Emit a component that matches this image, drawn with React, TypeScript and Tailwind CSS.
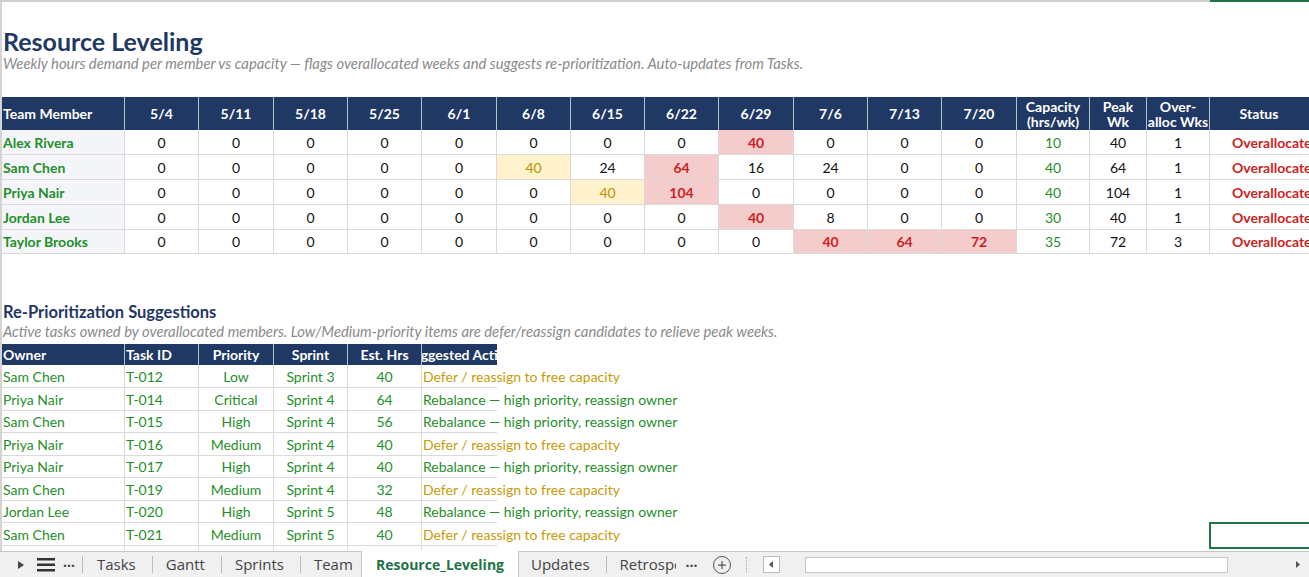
import { Plus } from "lucide-react";

type Cell = { v: number; hi?: "red" | "yellow" };

interface Member {
  name: string;
  weeks: Cell[];
  capacity: number;
  peak: number;
  over: number;
}

const weeks = ["5/4", "5/11", "5/18", "5/25", "6/1", "6/8", "6/15", "6/22", "6/29", "7/6", "7/13", "7/20"];
const weekWidths = ["w-[74px]", "w-[75px]", "w-[74px]", "w-[74px]", "w-[75px]", "w-[74px]", "w-[74px]", "w-[74px]", "w-[75px]", "w-[74px]", "w-[74px]", "w-[75px]"];
const rowHeights = ["h-[25px]", "h-[25px]", "h-[25px]", "h-[25px]", "h-[24px]"];

const z = (): Cell => ({ v: 0 });
const members: Member[] = [
  { name: "Alex Rivera", weeks: [z(), z(), z(), z(), z(), z(), z(), z(), { v: 40, hi: "red" }, z(), z(), z()], capacity: 10, peak: 40, over: 1 },
  { name: "Sam Chen", weeks: [z(), z(), z(), z(), z(), { v: 40, hi: "yellow" }, { v: 24 }, { v: 64, hi: "red" }, { v: 16 }, { v: 24 }, z(), z()], capacity: 40, peak: 64, over: 1 },
  { name: "Priya Nair", weeks: [z(), z(), z(), z(), z(), z(), { v: 40, hi: "yellow" }, { v: 104, hi: "red" }, z(), z(), z(), z()], capacity: 40, peak: 104, over: 1 },
  { name: "Jordan Lee", weeks: [z(), z(), z(), z(), z(), z(), z(), z(), { v: 40, hi: "red" }, { v: 8 }, z(), z()], capacity: 30, peak: 40, over: 1 },
  { name: "Taylor Brooks", weeks: [z(), z(), z(), z(), z(), z(), z(), z(), z(), { v: 40, hi: "red" }, { v: 64, hi: "red" }, { v: 72, hi: "red" }], capacity: 35, peak: 72, over: 3 },
];

const DEFER = "Defer / reassign to free capacity";
const REBAL = "Rebalance — high priority, reassign owner";
const suggestions = [
  ["Sam Chen", "T-012", "Low", "Sprint 3", "40", DEFER],
  ["Priya Nair", "T-014", "Critical", "Sprint 4", "64", REBAL],
  ["Sam Chen", "T-015", "High", "Sprint 4", "56", REBAL],
  ["Priya Nair", "T-016", "Medium", "Sprint 4", "40", DEFER],
  ["Priya Nair", "T-017", "High", "Sprint 4", "40", REBAL],
  ["Sam Chen", "T-019", "Medium", "Sprint 4", "32", DEFER],
  ["Jordan Lee", "T-020", "High", "Sprint 5", "48", REBAL],
  ["Sam Chen", "T-021", "Medium", "Sprint 5", "40", DEFER],
];
const sugHeights = ["h-[23px]", "h-[23px]", "h-[22px]", "h-[23px]", "h-[22px]", "h-[23px]", "h-[22px]", "h-[23px]"];

function HeaderCell({ w, children, left }: { w: string; children: React.ReactNode; left?: boolean }) {
  return (
    <div
      className={`${w} shrink-0 h-full flex items-center ${left ? "justify-start pl-[1px]" : "justify-center text-center"} border-r border-[#b7bdc9] overflow-hidden whitespace-nowrap`}
    >
      {children}
    </div>
  );
}

function TopTable() {
  return (
    <div className="flex flex-col">
      <div className="flex h-[33px] bg-[#1f3864] text-white font-bold text-[14px] leading-[15px]">
        <HeaderCell w="w-[123px]" left>Team Member</HeaderCell>
        {weeks.map((wk, i) => (
          <HeaderCell key={wk} w={weekWidths[i]}>{wk}</HeaderCell>
        ))}
        <HeaderCell w="w-[73px]">
          <span>Capacity<br />(hrs/wk)</span>
        </HeaderCell>
        <HeaderCell w="w-[57px]">
          <span>Peak<br />Wk</span>
        </HeaderCell>
        <HeaderCell w="w-[63px]">
          <span>Over-<br />alloc Wks</span>
        </HeaderCell>
        <div className="w-[110px] shrink-0 flex items-center justify-center pr-[12px]">Status</div>
      </div>
      {members.map((m, r) => (
        <div key={m.name} className={`flex ${rowHeights[r]} text-[14px] border-b border-[#dadada]`}>
          <div className="w-[123px] shrink-0 flex items-center pl-[1px] bg-[#f3f5f9] border-r border-[#dadada] font-bold text-[#1f8f2a]">
            {m.name}
          </div>
          {m.weeks.map((c, i) => (
            <div
              key={i}
              className={`${weekWidths[i]} shrink-0 flex items-center justify-center border-r border-[#dadada] ${
                c.hi === "red"
                  ? "bg-[#f4cccc] text-[#cc1f1f] font-bold"
                  : c.hi === "yellow"
                  ? "bg-[#fff2cc] text-[#bf9000]"
                  : "text-[#111]"
              }`}
            >
              {c.v}
            </div>
          ))}
          <div className="w-[73px] shrink-0 flex items-center justify-center border-r border-[#dadada] text-[#1f8f2a]">{m.capacity}</div>
          <div className="w-[57px] shrink-0 flex items-center justify-center border-r border-[#dadada] text-[#111]">{m.peak}</div>
          <div className="w-[63px] shrink-0 flex items-center justify-center border-r border-[#dadada] text-[#111]">{m.over}</div>
          <div className="w-[110px] shrink-0 flex items-center pl-[22px] font-bold text-[#cc1f1f] whitespace-nowrap">Overallocated</div>
        </div>
      ))}
    </div>
  );
}

function SuggestionTable() {
  const cols = ["w-[123px]", "w-[74px]", "w-[75px]", "w-[74px]", "w-[74px]"];
  return (
    <div className="flex flex-col">
      <div className="flex h-[21px] w-[495px] bg-[#1f3864] text-white font-bold text-[14px]">
        <HeaderCell w={cols[0]} left>Owner</HeaderCell>
        <HeaderCell w={cols[1]} left>Task ID</HeaderCell>
        <HeaderCell w={cols[2]}>Priority</HeaderCell>
        <HeaderCell w={cols[3]}>Sprint</HeaderCell>
        <HeaderCell w={cols[4]}>Est. Hrs</HeaderCell>
        <div className="w-[75px] shrink-0 flex items-center justify-center overflow-hidden whitespace-nowrap">Suggested Action</div>
      </div>
      {suggestions.map((s, r) => (
        <div key={s[1]} className={`flex ${sugHeights[r]} w-[495px] text-[14px] text-[#1f8f2a] border-b border-[#dadada] ${r === 7 ? "relative" : ""}`}>
          {r === 7 && <div className="absolute left-[-2px] top-0 bottom-0 w-[2px] bg-[#217346]" />}
          <div className={`${cols[0]} shrink-0 flex items-center pl-[1px] border-r border-[#dadada]`}>{s[0]}</div>
          <div className={`${cols[1]} shrink-0 flex items-center pl-[1px] border-r border-[#dadada]`}>{s[1]}</div>
          <div className={`${cols[2]} shrink-0 flex items-center justify-center border-r border-[#dadada]`}>{s[2]}</div>
          <div className={`${cols[3]} shrink-0 flex items-center justify-center border-r border-[#dadada]`}>{s[3]}</div>
          <div className={`${cols[4]} shrink-0 flex items-center justify-center border-r border-[#dadada]`}>{s[4]}</div>
          <div className={`w-[75px] shrink-0 flex items-center pl-[1px] whitespace-nowrap ${s[5] === DEFER ? "text-[#c99a06]" : "text-[#1f8f2a]"}`}>
            {s[5]}
          </div>
        </div>
      ))}
      <div className="flex h-[4px] w-[495px]">
        {cols.map((c) => (
          <div key={c} className={`${c} shrink-0 border-r border-[#dadada]`} />
        ))}
      </div>
    </div>
  );
}

function Sep() {
  return <div className="w-px h-[17px] bg-[#bdbdbd] shrink-0" />;
}

function TabBar() {
  return (
    <div className="h-[26px] shrink-0 flex items-stretch bg-[#f0f0f0] border-t border-[#c6c6c6] text-[14px] text-[#444] font-['Open_Sans',sans-serif]">
      <div className="w-[361px] shrink-0 flex items-center">
        <svg width="6" height="8" viewBox="0 0 6 8" className="ml-[18px]">
          <path d="M0 0 L6 4 L0 8 Z" fill="#444" />
        </svg>
        <svg width="18" height="14" viewBox="0 0 18 14" className="ml-[13px]">
          <rect x="0" y="0" width="18" height="2.5" fill="#333" />
          <rect x="0" y="5.5" width="18" height="2.5" fill="#333" />
          <rect x="0" y="11" width="18" height="2.5" fill="#333" />
        </svg>
        <span className="ml-[8px] text-[#444] leading-none pb-[6px] font-bold">...</span>
        <div className="ml-[7px]"><Sep /></div>
        <span className="ml-[14px] text-[15px]">Tasks</span>
        <div className="ml-[16px]"><Sep /></div>
        <span className="ml-[13px] text-[15px]">Gantt</span>
        <div className="ml-[16px]"><Sep /></div>
        <span className="ml-[13px] text-[15px]">Sprints</span>
        <div className="ml-[16px]"><Sep /></div>
        <span className="ml-[13px] text-[15px]">Team</span>
      </div>
      <div className="w-[158px] shrink-0 -mt-px bg-white border-x border-[#c6c6c6] flex items-center justify-center font-bold text-[#217346]">
        Resource_Leveling
      </div>
      <div className="flex items-center">
        <span className="ml-[12px] text-[15px]">Updates</span>
        <div className="ml-[16px]"><Sep /></div>
        <span className="ml-[13px] w-[56px] overflow-hidden whitespace-nowrap text-[15px]">Retrospective</span>
        <span className="ml-[10px] leading-none pb-[6px] font-bold">...</span>
        <div className="ml-[15px] w-[18px] h-[18px] rounded-full border-[1.5px] border-[#555] flex items-center justify-center">
          <Plus size={12} strokeWidth={2.5} color="#555" />
        </div>
        <div className="ml-[15px] h-[16px] border-l border-dotted border-[#aaa]" />
        <div className="ml-[16px] w-[17px] h-[17px] bg-white border border-[#bcbcbc] flex items-center justify-center">
          <svg width="4" height="7" viewBox="0 0 4 7"><path d="M4 0 L0 3.5 L4 7 Z" fill="#555" /></svg>
        </div>
        <div className="w-[25px]" />
        <div className="w-[423px] h-[16px] bg-white border border-[#c6c6c6]" />
        <div className="w-[68px]" />
        <svg width="4" height="7" viewBox="0 0 4 7"><path d="M0 0 L4 3.5 L0 7 Z" fill="#555" /></svg>
      </div>
    </div>
  );
}

export default function App() {
  return (
    <div className="w-[1309px] h-[577px] overflow-hidden bg-white flex flex-col font-['Lato',sans-serif]">
      <div className="flex h-[2px] shrink-0">
        <div className="w-[1210px] bg-[#cfcfcf]" />
        <div className="flex-1 bg-[#217346]" />
      </div>
      <div className="flex-1 flex overflow-hidden relative">
        <div className="w-[2px] shrink-0 bg-[#d4d4d4]" />
        <div className="flex-1 flex flex-col overflow-hidden">
          <div className="h-[26px] shrink-0" />
          <h1 className="h-[26px] shrink-0 text-[25px] leading-[26px] font-bold text-[#1f3864] pl-[1px]">Resource Leveling</h1>
          <p className="h-[18px] shrink-0 text-[14.8px] leading-[18px] italic text-[#8a8a8a] pl-[1px] whitespace-nowrap">
            Weekly hours demand per member vs capacity — flags overallocated weeks and suggests re-prioritization. Auto-updates from Tasks.
          </p>
          <div className="h-[25px] shrink-0" />
          <TopTable />
          <div className="h-[48px] shrink-0" />
          <h2 className="h-[20px] shrink-0 text-[16.5px] leading-[20px] font-bold text-[#1f3864] pl-[1px]">Re-Prioritization Suggestions</h2>
          <p className="h-[19px] shrink-0 text-[14.8px] leading-[19px] italic text-[#8a8a8a] pl-[1px] whitespace-nowrap">
            Active tasks owned by overallocated members. Low/Medium-priority items are defer/reassign candidates to relieve peak weeks.
          </p>
          <div className="h-[3px] shrink-0" />
          <SuggestionTable />
        </div>
        <div className="absolute left-[1209px] top-[520px] w-[110px] h-[27px] border-2 border-[#217346]" />
      </div>
      <TabBar />
    </div>
  );
}
